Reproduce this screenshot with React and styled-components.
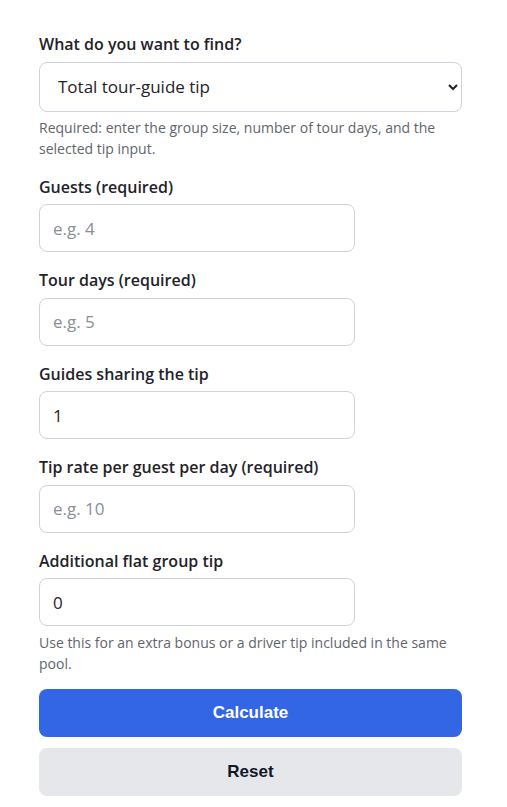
import React from "react";
import styled, { createGlobalStyle } from "styled-components";

const Global = createGlobalStyle`
  body {
    margin: 0;
    background: #ffffff;
    font-family: "Open Sans", "Noto Sans", sans-serif;
    color: #1f2328;
  }
`;

const Form = styled.form`
  width: 423px;
  padding: 32px 0 0 39px;
  display: flex;
  flex-direction: column;
`;

const Field = styled.div`
  display: flex;
  flex-direction: column;
  margin-bottom: ${(p) => p.gap || 16}px;
`;

const Label = styled.label`
  font-size: 16px;
  font-weight: 600;
  line-height: 24px;
  color: #1f2328;
  margin-bottom: 5.5px;
`;

const Select = styled.select`
  height: 50px;
  width: 100%;
  box-sizing: border-box;
  border: 1px solid #cdd3dc;
  border-radius: 8px;
  background: #fff;
  padding: 0 12px 0 14px;
  font-family: inherit;
  font-size: 17px;
  color: #1f2328;
`;

const Input = styled.input`
  height: 48px;
  width: 316px;
  box-sizing: border-box;
  border: 1px solid #cdd3dc;
  border-radius: 8px;
  padding: 0 13px;
  font-family: inherit;
  font-size: 17px;
  color: #1f2328;
  &::placeholder {
    color: #8a8f96;
  }
`;

const Help = styled.p`
  margin: 5.5px 0 0;
  font-size: 14px;
  line-height: 21px;
  color: #60656c;
`;

const Button = styled.button`
  height: 48px;
  width: 100%;
  border: none;
  border-radius: 8px;
  font-family: "Liberation Sans", Arial, sans-serif;
  font-size: 17px;
  font-weight: 700;
  background: ${(p) => (p.primary ? "#3366e4" : "#e5e7eb")};
  color: ${(p) => (p.primary ? "#ffffff" : "#111827")};
  margin-bottom: 11px;
`;

const fields = [
  { id: "guests", label: "Guests (required)", placeholder: "e.g. 4" },
  { id: "days", label: "Tour days (required)", placeholder: "e.g. 5" },
  { id: "guides", label: "Guides sharing the tip", value: "1" },
  { id: "rate", label: "Tip rate per guest per day (required)", placeholder: "e.g. 10" },
];

export default function App() {
  return (
    <>
      <Global />
      <Form onSubmit={(e) => e.preventDefault()}>
        <Field gap={15.5}>
          <Label htmlFor="mode">What do you want to find?</Label>
          <Select id="mode" defaultValue="total">
            <option value="total">Total tour-guide tip</option>
            <option value="rate">Tip rate per guest per day</option>
          </Select>
          <Help>
            Required: enter the group size, number of tour days, and the
            selected tip input.
          </Help>
        </Field>
        {fields.map((f) => (
          <Field key={f.id}>
            <Label htmlFor={f.id}>{f.label}</Label>
            <Input
              id={f.id}
              type="number"
              placeholder={f.placeholder}
              defaultValue={f.value}
            />
          </Field>
        ))}
        <Field gap={15}>
          <Label htmlFor="flat">Additional flat group tip</Label>
          <Input id="flat" type="number" defaultValue="0" />
          <Help>
            Use this for an extra bonus or a driver tip included in the same
            pool.
          </Help>
        </Field>
        <Button primary type="submit">Calculate</Button>
        <Button type="reset">Reset</Button>
      </Form>
    </>
  );
}
